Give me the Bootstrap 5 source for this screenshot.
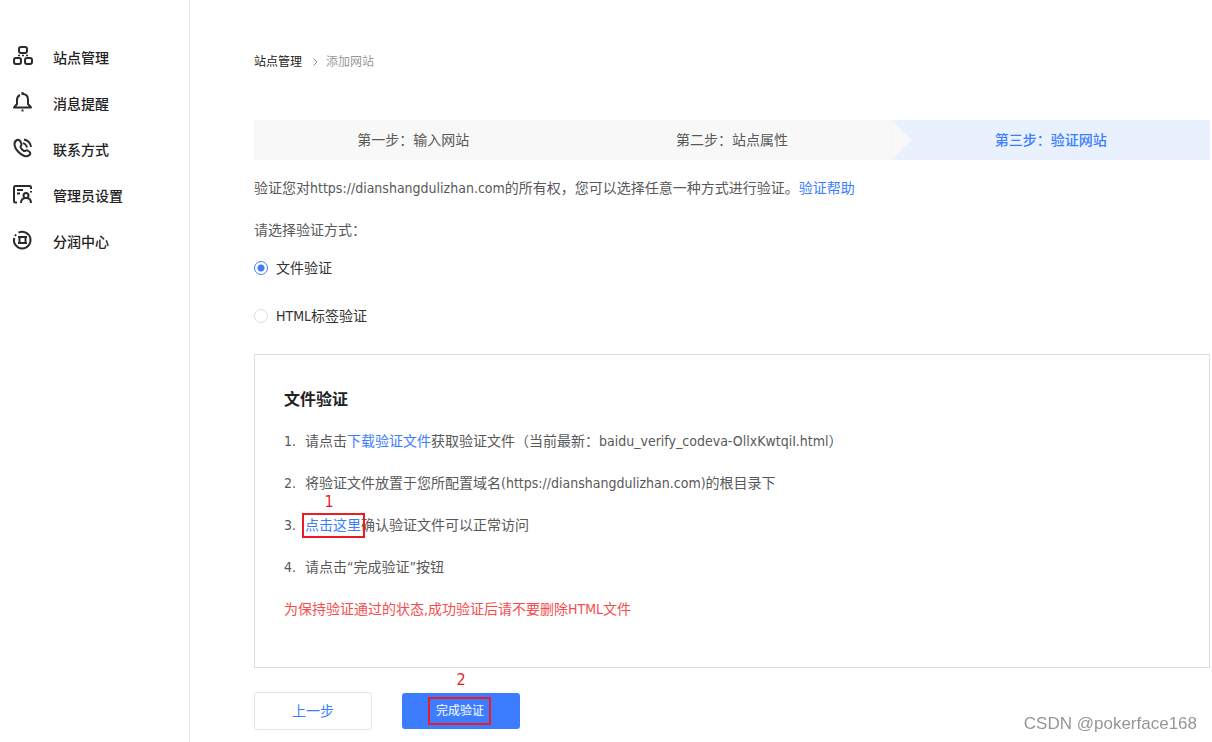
<!DOCTYPE html>
<html lang="zh-CN">
<head>
<meta charset="utf-8">
<meta name="viewport" content="width=device-width, initial-scale=1">
<title>验证网站</title>
<link href="https://cdn.jsdelivr.net/npm/bootstrap@5.3.0/dist/css/bootstrap.min.css" rel="stylesheet">
<style>
  :root { --brand: #3c7dff; --ink: #222; --text: #595959; --mark: #ed1c24; }
  body { font: 14px/28px "DejaVu Sans Condensed", "Noto Sans CJK SC", sans-serif; color: var(--text); background: #fff; }
  a { color: var(--brand); text-decoration: none; }
  .sidebar { width: 190px; border-right: 1px solid #e6e6e6; padding: 35px 12px; }
  .sidebar .nav-link { height: 46px; padding: 0; gap: 19px; color: var(--ink); font-weight: 500; }
  .sidebar svg { width: 22px; height: 22px; flex: none; fill: none; stroke: #2b2b2b; stroke-width: 2; stroke-linejoin: round; margin-top: -4px; }
  .content { min-width: 0; padding: 53px 2px 12px 64px; }
  .crumbs { font-size: 12px; line-height: 18px; }
  .crumbs a { color: var(--ink); }
  .crumbs span { color: #999; }
  .crumbs svg { width: 5px; height: 8px; margin: 0 8px 0 11px; fill: none; stroke: #888; }
  .steps { margin-top: 49px; height: 40px; background: #f8f8f8; }
  .steps li { flex: 1 1 0; text-align: center; line-height: 40px; }
  .steps .current { position: relative; background: #e9f1ff; color: var(--brand); font-weight: 500; }
  .steps .current::before { content: ""; position: absolute; left: 0; top: 0; width: 20px; height: 40px; background: #f8f8f8; clip-path: polygon(0 0, 100% 50%, 0 100%); }
  .line { margin: 14px 0 0; }
  .choices { margin-top: 12px; gap: 24px; }
  .choices label { line-height: 24px; color: #333; }
  .choices input { appearance: none; width: 14px; height: 14px; margin: 0 8px 0 0; border: 1px solid #ddd; border-radius: 50%; background: #fff; }
  .choices input:checked { border-color: var(--brand); background: radial-gradient(circle, var(--brand) 3px, #fff 4px); }
  .panel { margin-top: 26px; border: 1px solid #ddd; padding: 32px 29px 44px; }
  .panel h2 { margin: 0 0 14px; font-size: 16px; line-height: 26px; font-weight: 700; color: var(--ink); }
  .panel ol { counter-reset: n; gap: 14px; }
  .panel li { counter-increment: n; display: flex; }
  .panel li::before { content: counter(n) "."; width: 21px; flex: none; }
  .warn { color: #f54d4d; }
  .marked { position: relative; }
  .marked::after { content: ""; position: absolute; border: 2px solid var(--mark); inset: 2px -4px 1px -3px; pointer-events: none; }
  .marked b { position: absolute; left: 0; right: 0; bottom: 100%; text-align: center; font-size: 16px; line-height: 18px; font-weight: 400; color: var(--mark); }
  .panel .marked b { right: 8px; }
  .actions { margin-top: 24px; gap: 30px; }
  .actions .btn { width: 118px; height: 38px; padding: 0; border-radius: 3px; font-size: 14px; }
  .btn-back { color: var(--brand); border: 1px solid #e4e4e4; background: #fff; }
  .actions .btn-done, .actions .btn-done:hover { height: 36px; font-size: 12px; color: #fff; background: var(--brand); border: 0; }
  .btn-done .marked { display: inline-block; line-height: 28px; padding: 0 6px 0 4px; }
  .btn-done .marked::after { inset: 0 -1px 0 -4px; }
  .btn-done .marked b { margin-bottom: 8px; }
  .watermark { position: fixed; right: 15px; bottom: 4px; font-family: "Liberation Sans", sans-serif; font-size: 17px; color: #969696; }
</style>
</head>
<body>
<div class="d-flex min-vh-100">
  <aside class="sidebar flex-shrink-0">
    <nav class="nav flex-column">
      <a class="nav-link d-flex align-items-center" href="#">
        <svg viewBox="0 0 22 22"><rect x="7" y="2" width="8" height="6" rx="2"/><rect x="2" y="13" width="7" height="6" rx="2"/><rect x="13" y="13" width="7" height="6" rx="2"/><path d="M6 10.500h2m2 0h2m2 0h2" stroke-width="1.500"/></svg>站点管理</a>
      <a class="nav-link d-flex align-items-center" href="#">
        <svg viewBox="0 0 22 22"><path d="M8 4C5.500 5 5 7 5 9v4l-3 3.500h17L16 13V9c0-4-2.500-6-5.500-6"/><path d="M9.500 19.500h2M10.500 1v3"/></svg>消息提醒</a>
      <a class="nav-link d-flex align-items-center" href="#">
        <svg viewBox="0 0 22 22"><path d="M5 3C1 5 2 10 6 14.500s9 6.500 12 3c1-1.500 0-2.500-2.500-4-1.500-.8-2 1-3.500.5-1.500-.8-3-2.500-3.500-4 0-1.300 1.500-1.500 1-3C8.500 4 7 2 5 3z"/><path d="M11 6c2.500.8 3.500 2 4 4.500M12 2.500c3.500.8 6.500 3.500 7 7.500" stroke-width="1.800"/></svg>联系方式</a>
      <a class="nav-link d-flex align-items-center" href="#">
        <svg viewBox="0 0 22 22"><path d="M5 19.500H3.500Q2 19.500 2 18V4.500Q2 3 3.500 3h14Q19 3 19 4.500V6m0 2v1.500M5 7h6M5 10.500h3"/><circle cx="14" cy="12.500" r="2.500"/><path d="M9 20c0-3.500 2-5 5-5s5 1.500 5 5"/></svg>管理员设置</a>
      <a class="nav-link d-flex align-items-center" href="#">
        <svg viewBox="0 0 22 22"><path d="M6.500 3.700A8.300 8.300 0 1 1 2.200 9M3 7l1-1.500"/><rect x="7.500" y="8" width="6" height="6"/><path d="M6 8h9M6 14h9"/></svg>分润中心</a>
    </nav>
  </aside>
  <main class="content flex-grow-1">
    <nav class="crumbs d-flex align-items-center" aria-label="面包屑">
      <a href="#">站点管理</a>
      <svg viewBox="0 0 5 8"><path d="M.5.500 4 4 .5 7.500"/></svg>
      <span>添加网站</span>
    </nav>
    <ol class="steps d-flex list-unstyled mb-0">
      <li>第一步：输入网站</li>
      <li>第二步：站点属性</li>
      <li class="current">第三步：验证网站</li>
    </ol>
    <p class="line">验证您对https://dianshangdulizhan.com的所有权，您可以选择任意一种方式进行验证。<a href="#">验证帮助</a></p>
    <p class="line">请选择验证方式：</p>
    <div class="choices d-flex flex-column align-items-start">
      <label class="d-flex align-items-center" for="byFile"><input type="radio" name="method" id="byFile" checked>文件验证</label>
      <label class="d-flex align-items-center" for="byTag"><input type="radio" name="method" id="byTag">HTML标签验证</label>
    </div>
    <section class="panel">
      <h2>文件验证</h2>
      <ol class="list-unstyled d-flex flex-column mb-0">
        <li><div>请点击<a href="#">下载验证文件</a>获取验证文件（当前最新：baidu_verify_codeva-OllxKwtqiI.html）</div></li>
        <li><div>将验证文件放置于您所配置域名(https://dianshangdulizhan.com)的根目录下</div></li>
        <li><div><span class="marked d-inline-block"><a href="#">点击这里</a><b>1</b></span>确认验证文件可以正常访问</div></li>
        <li><div>请点击“完成验证”按钮</div></li>
      </ol>
      <p class="line warn">为保持验证通过的状态,成功验证后请不要删除HTML文件</p>
    </section>
    <div class="actions d-flex align-items-center">
      <button type="button" class="btn btn-back">上一步</button>
      <button type="button" class="btn btn-done"><span class="marked">完成验证<b>2</b></span></button>
    </div>
  </main>
</div>
<div class="watermark">CSDN @pokerface168</div>
<script src="https://cdn.jsdelivr.net/npm/bootstrap@5.3.0/dist/js/bootstrap.bundle.min.js"></script>
</body>
</html>
